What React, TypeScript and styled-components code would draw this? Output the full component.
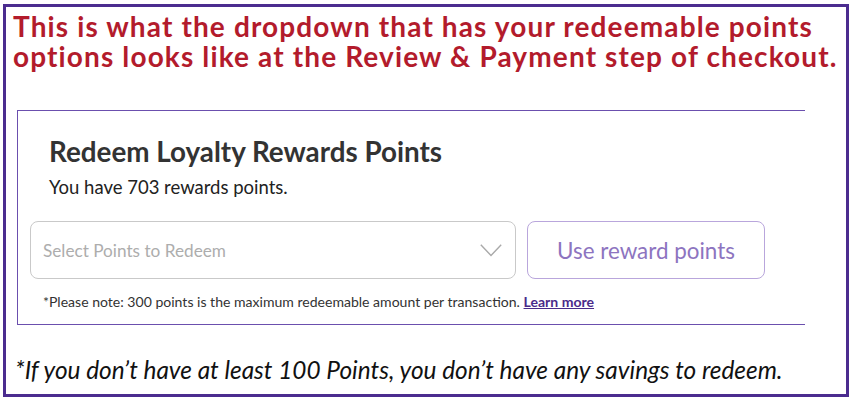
import React from 'react'
import styled, { createGlobalStyle } from 'styled-components'

const GlobalStyle = createGlobalStyle`
  html, body {
    margin: 0;
    padding: 0;
    background: white;
  }
  body {
    font-family: 'Lato', 'Liberation Sans', sans-serif;
  }
`

const Frame = styled.div`
  box-sizing: border-box;
  width: 846px;
  height: 393px;
  margin: 4px 0 0 3px;
  border: 3px solid #4b2c8f;
  padding: 4px 0 0 7px;
  display: flex;
  flex-direction: column;
`

const Headline = styled.h1`
  margin: 0;
  font-size: 28px;
  line-height: 30px;
  font-weight: 700;
  letter-spacing: 1.13px;
  color: #b31b2c;
  white-space: nowrap;
`

const Card = styled.section`
  box-sizing: border-box;
  width: 788px;
  height: 215px;
  margin: 39px 0 0 4px;
  border: 1px solid #6b4fae;
  border-right: none;
  padding: 25px 0 0 12px;
  display: flex;
  flex-direction: column;
`

const CardTitle = styled.h2`
  margin: 0 0 0 19px;
  font-size: 27.8px;
  line-height: 32px;
  font-weight: 700;
  color: #333333;
`

const Balance = styled.p`
  margin: 8px 0 0 19px;
  font-size: 18.5px;
  line-height: 22px;
  color: #222222;
`

const Controls = styled.div`
  display: flex;
  gap: 11px;
  margin-top: 23px;
`

const SelectBox = styled.div`
  box-sizing: border-box;
  width: 486px;
  height: 58px;
  border: 1px solid #c9c9c9;
  border-radius: 8px;
  padding: 0 13px 0 12px;
  display: flex;
  align-items: center;
  justify-content: space-between;
`

const Placeholder = styled.span`
  font-size: 17.2px;
  color: #adadad;
`

const RewardButton = styled.button`
  box-sizing: border-box;
  width: 238px;
  height: 58px;
  border: 1px solid #b9a6dc;
  border-radius: 8px;
  background: white;
  font-family: 'Lato', 'Liberation Sans', sans-serif;
  font-size: 22.4px;
  color: #8d74c0;
  cursor: pointer;
`

const Note = styled.p`
  margin: 15px 0 0 13px;
  font-size: 14.05px;
  line-height: 16px;
  color: #333333;
`

const LearnMore = styled.a`
  color: #4a2a8a;
  font-weight: 700;
  text-decoration: underline;
`

const Footnote = styled.p`
  margin: 30px 0 0 2px;
  font-size: 24.4px;
  line-height: 30px;
  font-style: italic;
  color: #111111;
  white-space: nowrap;
`

const Chevron = () => (
  <svg width='22' height='13' viewBox='0 0 22 13' fill='none'>
    <path d='M0.8 0.8 L11 11.5 L21.2 0.8' stroke='#a9a9a9' strokeWidth='1.4' />
  </svg>
)

const App = () => {
  return (
    <>
      <GlobalStyle />
      <Frame>
        <Headline>
          This is what the dropdown that has your redeemable points
          <br />
          options looks like at the Review &amp; Payment step of checkout.
        </Headline>
        <Card>
          <CardTitle>Redeem Loyalty Rewards Points</CardTitle>
          <Balance>You have 703 rewards points.</Balance>
          <Controls>
            <SelectBox>
              <Placeholder>Select Points to Redeem</Placeholder>
              <Chevron />
            </SelectBox>
            <RewardButton>Use reward points</RewardButton>
          </Controls>
          <Note>
            *Please note: 300 points is the maximum redeemable amount per transaction.{' '}
            <LearnMore href='#'>Learn more</LearnMore>
          </Note>
        </Card>
        <Footnote>*If you don’t have at least 100 Points, you don’t have any savings to redeem.</Footnote>
      </Frame>
    </>
  )
}

export default App
